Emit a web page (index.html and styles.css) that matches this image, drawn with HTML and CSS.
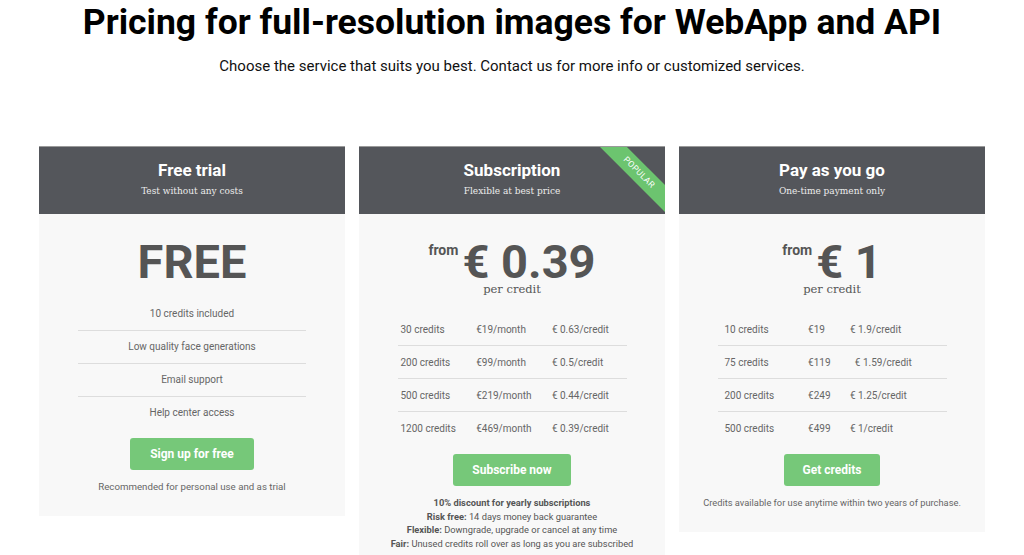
FILE: index.html
```html
<!DOCTYPE html>
<html lang="en">
<head>
  <meta charset="UTF-8" />
  <meta name="viewport" content="width=device-width, initial-scale=1" />
  <title>Pricing</title>
  <link rel="stylesheet" href="styles.css">
</head>
<body>
  <header class="intro">
    <h1>Pricing for full-resolution images for WebApp and API</h1>
    <p>Choose the service that suits you best. Contact us for more info or customized services.</p>
  </header>

  <div class="plans">
    <!-- Free trial -->
    <div class="plan plan-free">
      <div class="plan-head">
        <h2>Free trial</h2>
        <p>Test without any costs</p>
      </div>
      <div class="plan-body">
        <div class="price free">FREE</div>
        <ul class="features">
          <li>10 credits included</li>
          <li>Low quality face generations</li>
          <li>Email support</li>
          <li>Help center access</li>
        </ul>
        <a class="btn" href="#">Sign up for free</a>
        <p class="note">Recommended for personal use and as trial</p>
      </div>
    </div>

    <!-- Subscription -->
    <div class="plan plan-sub">
      <div class="plan-head">
        <h2>Subscription</h2>
        <p>Flexible at best price</p>
        <div class="ribbon">POPULAR</div>
      </div>
      <div class="plan-body">
        <div class="price"><span class="from">from</span>€ 0.39</div>
        <div class="per">per credit</div>
        <table class="rates">
          <tr><td>30 credits</td><td>€19/month</td><td>€ 0.63/credit</td></tr>
          <tr><td>200 credits</td><td>€99/month</td><td>€ 0.5/credit</td></tr>
          <tr><td>500 credits</td><td>€219/month</td><td>€ 0.44/credit</td></tr>
          <tr><td>1200 credits</td><td>€469/month</td><td>€ 0.39/credit</td></tr>
        </table>
        <a class="btn" href="#">Subscribe now</a>
        <div class="terms">
          <b>10% discount for yearly subscriptions</b><br>
          <b>Risk free:</b> 14 days money back guarantee<br>
          <b>Flexible:</b> Downgrade, upgrade or cancel at any time<br>
          <b>Fair:</b> Unused credits roll over as long as you are subscribed
        </div>
      </div>
    </div>

    <!-- Pay as you go -->
    <div class="plan plan-payg">
      <div class="plan-head">
        <h2>Pay as you go</h2>
        <p>One-time payment only</p>
      </div>
      <div class="plan-body">
        <div class="price"><span class="from">from</span>€ 1</div>
        <div class="per">per credit</div>
        <table class="rates">
          <tr><td>10 credits</td><td>€19</td><td>€ 1.9/credit</td></tr>
          <tr><td>75 credits</td><td>€119</td><td>&nbsp; € 1.59/credit</td></tr>
          <tr><td>200 credits</td><td>€249</td><td>€ 1.25/credit</td></tr>
          <tr><td>500 credits</td><td>€499</td><td>€ 1/credit</td></tr>
        </table>
        <a class="btn" href="#">Get credits</a>
        <p class="note">Credits available for use anytime within two years of purchase.</p>
      </div>
    </div>
  </div>
</body>
</html>
```

FILE: styles.css
```css
body {
  font-family: Roboto, 'Liberation Sans', sans-serif;
  margin: 0;
  padding: 0;
  background: #fff;
  color: #666;
}
.intro {
  text-align: center;
  padding-top: 1px;
}
.intro h1 {
  margin: 0;
  font-size: 35.5px;
  font-weight: 700;
  color: #000;
  line-height: 42px;
}
.intro p {
  margin: 13px 0 0;
  font-size: 15px;
  color: #111;
  line-height: 20px;
}
.plans {
  display: flex;
  justify-content: center;
  align-items: flex-start;
  gap: 14px;
  margin-top: 70px;
}
.plan {
  width: 306px;
  background: #f8f8f8;
}
.plan-head {
  position: relative;
  overflow: hidden;
  height: 68px;
  background: #54565b;
  color: #fff;
  text-align: center;
  border-top: 1px solid #9a9a9a;
  box-sizing: border-box;
}
.plan-head h2 {
  margin: 12px 0 0;
  font-size: 17px;
  font-weight: 700;
  line-height: 22px;
}
.plan-head p {
  margin: 3px 0 0;
  font-family: 'DejaVu Serif Condensed', 'DejaVu Serif', serif;
  font-stretch: condensed;
  font-size: 10px;
  line-height: 14px;
  color: #ececec;
}
.ribbon {
  position: absolute;
  top: 16px;
  right: -34px;
  width: 120px;
  height: 19px;
  line-height: 19px;
  background: #6cc46f;
  color: #fff;
  font-size: 8.5px;
  letter-spacing: 0.4px;
  text-align: center;
  transform: rotate(45deg);
}
.plan-body {
  padding: 26px 0 22px;
  text-align: center;
}
.price {
  font-size: 47px;
  font-weight: 700;
  line-height: 44px;
  color: #555;
}
.price .from {
  font-size: 14px;
  vertical-align: top;
  line-height: 14px;
  margin-right: 4px;
  position: relative;
  top: 3px;
}
.per {
  font-family: 'DejaVu Serif', 'Liberation Serif', serif;
  font-size: 11.5px;
  line-height: 14px;
  color: #555;
  margin-top: -2px;
}
.features {
  list-style: none;
  margin: 14px auto 0;
  padding: 0;
  width: 228px;
  font-size: 10px;
}
.features li {
  line-height: 32px;
  border-top: 1px solid #ddd;
}
.features li:first-child {
  border-top: none;
}
.rates {
  width: 229px;
  margin: 17px auto 0;
  border-collapse: collapse;
  font-size: 10px;
  text-align: left;
}
.rates td {
  padding: 0 3px;
  height: 32px;
  white-space: nowrap;
}
.plan-payg .rates td:first-child {
  padding-left: 7px;
}
.rates tr + tr td {
  border-top: 1px solid #ddd;
}
.btn {
  display: inline-block;
  margin-top: 10px;
  padding: 0 19px;
  height: 32px;
  line-height: 32px;
  background: #76c879;
  border-radius: 3px;
  color: #fff;
  font-size: 12px;
  font-weight: 700;
  text-decoration: none;
}
.plan-free .btn {
  margin-top: 9px;
  padding: 0 20px;
}
.note {
  margin: 10px 0 0;
  font-size: 9.7px;
  line-height: 14px;
}
.plan-payg .note {
  font-size: 9.3px;
}
.terms {
  margin-top: 10px;
  font-size: 9.3px;
  line-height: 13.5px;
  color: #555;
}
```
